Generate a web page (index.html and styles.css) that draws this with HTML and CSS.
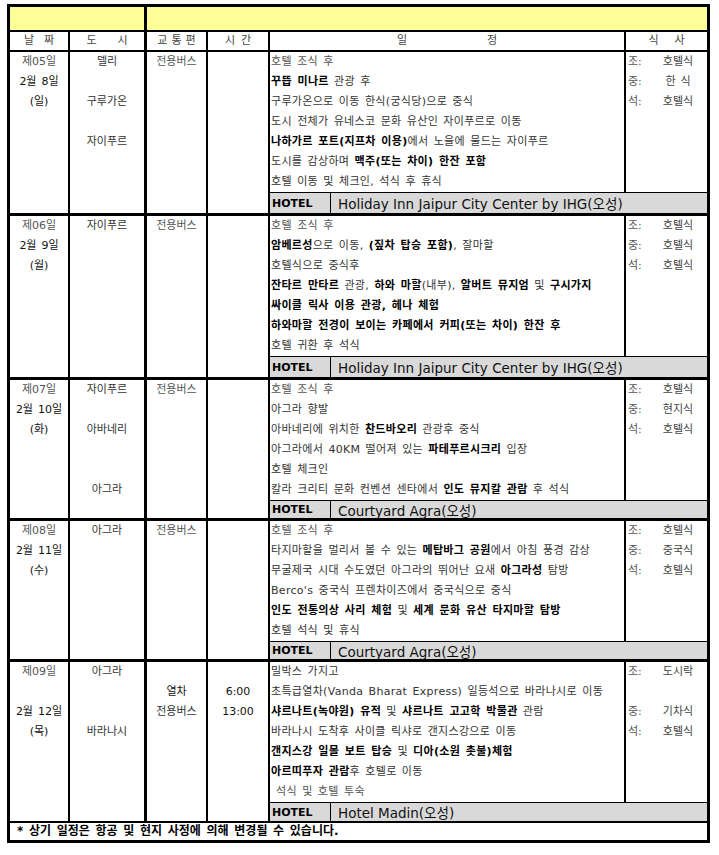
FILE: index.html
```html
<!DOCTYPE html>
<html lang="ko">
<head>
<meta charset="utf-8">
<title>일정표</title>
<link rel="stylesheet" href="styles.css">
</head>
<body>
<div class="sheet">
  <div class="top">
    <div class="top-a"></div>
    <div class="top-b"></div>
  </div>
  <div class="head">
    <div class="hc c1 g10">날<span>짜</span></div>
    <div class="hc c2 g21">도<span>시</span></div>
    <div class="hc c3 g4">교<span>통</span><span>편</span></div>
    <div class="hc c4 g6">시<span>간</span></div>
    <div class="hc c5 g80">일<span>정</span></div>
    <div class="hc c6 g16">식<span>사</span></div>
  </div>

  <!-- Day 5 -->
  <div class="day r7">
    <div class="col c1"><div class="ln lt">제05일</div><div class="ln dk">2월 8일</div><div class="ln dk">(일)</div></div>
    <div class="col c2"><div class="ln">델리</div><div class="ln"></div><div class="ln">구루가온</div><div class="ln"></div><div class="ln">자이푸르</div></div>
    <div class="col c3"><div class="ln lt">전용버스</div></div>
    <div class="col c4"></div>
    <div class="tx sp">호텔 조식 후</div>
    <div class="tx"><b>꾸뜹 미나르</b> 관광 후</div>
    <div class="tx">구루가온으로 이동 한식(궁식당)으로 중식</div>
    <div class="tx">도시 전체가 유네스코 문화 유산인 자이푸르로 이동</div>
    <div class="tx"><b>나하가르 포트(지프차 이용)</b>에서 노을에 물드는 자이푸르</div>
    <div class="tx">도시를 감상하며 <b>맥주(또는 차이) 한잔 포함</b></div>
    <div class="tx">호텔 이동 및 체크인, 석식 후 휴식</div>
    <div class="meal">
      <div class="ml"><span class="mk">조:</span><span class="mv">호텔식</span></div>
      <div class="ml"><span class="mk">중:</span><span class="mv dk">한 식</span></div>
      <div class="ml"><span class="mk">석:</span><span class="mv dk">호텔식</span></div>
    </div>
    <div class="hotel"><div class="hl">HOTEL</div><div class="hn">Holiday Inn Jaipur City Center by IHG(오성)</div></div>
  </div>

  <!-- Day 6 -->
  <div class="day r7">
    <div class="col c1"><div class="ln lt">제06일</div><div class="ln dk">2월 9일</div><div class="ln dk">(월)</div></div>
    <div class="col c2"><div class="ln">자이푸르</div></div>
    <div class="col c3"><div class="ln lt">전용버스</div></div>
    <div class="col c4"></div>
    <div class="tx sp">호텔 조식 후</div>
    <div class="tx"><b>암베르성</b>으로 이동, <b>(짚차 탑승 포함)</b>, 잘마할</div>
    <div class="tx">호텔식으로 중식후</div>
    <div class="tx"><b>잔타르 만타르</b> 관광, <b>하와 마할</b>(내부), <b>알버트 뮤지엄</b> 및 <b>구시가지</b></div>
    <div class="tx"><b>싸이클 릭사 이용 관광, 헤나 체험</b></div>
    <div class="tx"><b>하와마할 전경이 보이는 카페에서 커피(또는 차이) 한잔 후</b></div>
    <div class="tx">호텔 귀환 후 석식</div>
    <div class="meal">
      <div class="ml"><span class="mk">조:</span><span class="mv">호텔식</span></div>
      <div class="ml"><span class="mk">중:</span><span class="mv">호텔식</span></div>
      <div class="ml"><span class="mk">석:</span><span class="mv">호텔식</span></div>
    </div>
    <div class="hotel"><div class="hl">HOTEL</div><div class="hn">Holiday Inn Jaipur City Center by IHG(오성)</div></div>
  </div>

  <!-- Day 7 -->
  <div class="day r6">
    <div class="col c1"><div class="ln lt">제07일</div><div class="ln dk">2월 10일</div><div class="ln dk">(화)</div></div>
    <div class="col c2"><div class="ln">자이푸르</div><div class="ln"></div><div class="ln">아바네리</div><div class="ln"></div><div class="ln"></div><div class="ln">아그라</div></div>
    <div class="col c3"><div class="ln lt">전용버스</div></div>
    <div class="col c4"></div>
    <div class="tx sp">호텔 조식 후</div>
    <div class="tx">아그라 향발</div>
    <div class="tx">아바네리에 위치한 <b>찬드바오리</b> 관광후 중식</div>
    <div class="tx">아그라에서 40KM 떨어져 있는 <b>파테푸르시크리</b> 입장</div>
    <div class="tx">호텔 체크인</div>
    <div class="tx">칼라 크리티 문화 컨벤션 센타에서 <b>인도 뮤지칼 관람</b> 후 석식</div>
    <div class="meal">
      <div class="ml"><span class="mk">조:</span><span class="mv">호텔식</span></div>
      <div class="ml"><span class="mk">중:</span><span class="mv">현지식</span></div>
      <div class="ml"><span class="mk">석:</span><span class="mv">호텔식</span></div>
    </div>
    <div class="hotel"><div class="hl">HOTEL</div><div class="hn">Courtyard Agra(오성)</div></div>
  </div>

  <!-- Day 8 -->
  <div class="day r6">
    <div class="col c1"><div class="ln lt">제08일</div><div class="ln dk">2월 11일</div><div class="ln dk">(수)</div></div>
    <div class="col c2"><div class="ln">아그라</div></div>
    <div class="col c3"><div class="ln lt">전용버스</div></div>
    <div class="col c4"></div>
    <div class="tx sp">호텔 조식 후</div>
    <div class="tx">타지마할을 멀리서 볼 수 있는 <b>메탑바그 공원</b>에서 아침 풍경 감상</div>
    <div class="tx">무굴제국 시대 수도였던 아그라의 뛰어난 요새 <b>아그라성</b> 탐방</div>
    <div class="tx">Berco's 중국식 프렌차이즈에서 중국식으로 중식</div>
    <div class="tx"><b>인도 전통의상 사리 체험</b> 및 <b>세계 문화 유산 타지마할 탐방</b></div>
    <div class="tx">호텔 석식 및 휴식</div>
    <div class="meal">
      <div class="ml"><span class="mk">조:</span><span class="mv">호텔식</span></div>
      <div class="ml"><span class="mk">중:</span><span class="mv">중국식</span></div>
      <div class="ml"><span class="mk">석:</span><span class="mv">호텔식</span></div>
    </div>
    <div class="hotel"><div class="hl">HOTEL</div><div class="hn">Courtyard Agra(오성)</div></div>
  </div>

  <!-- Day 9 -->
  <div class="day r7 last">
    <div class="col c1"><div class="ln lt">제09일</div><div class="ln"></div><div class="ln dk">2월 12일</div><div class="ln dk">(목)</div></div>
    <div class="col c2"><div class="ln">아그라</div><div class="ln"></div><div class="ln"></div><div class="ln">바라나시</div></div>
    <div class="col c3"><div class="ln"></div><div class="ln dk">열차</div><div class="ln">전용버스</div></div>
    <div class="col c4"><div class="ln"></div><div class="ln dk">6:00</div><div class="ln dk">13:00</div></div>
    <div class="tx">밀박스 가지고</div>
    <div class="tx">초특급열차(Vanda Bharat Express) 일등석으로 바라나시로 이동</div>
    <div class="tx"><b>샤르나트(녹야원) 유적</b> 및 <b>샤르나트 고고학 박물관</b> 관람</div>
    <div class="tx">바라나시 도착후 사이클 릭샤로 갠지스강으로 이동</div>
    <div class="tx"><b>갠지스강 일몰 보트 탑승</b> 및 <b>디아(소원 촛불)체험</b></div>
    <div class="tx"><b>아르띠푸자 관람</b>후 호텔로 이동</div>
    <div class="tx ind lt">석식 및 호텔 투숙</div>
    <div class="meal">
      <div class="ml"><span class="mk">조:</span><span class="mv">도시락</span></div>
      <div class="ml"></div>
      <div class="ml"><span class="mk">중:</span><span class="mv">기차식</span></div>
      <div class="ml"><span class="mk">석:</span><span class="mv">호텔식</span></div>
    </div>
    <div class="hotel"><div class="hl">HOTEL</div><div class="hn">Hotel Madin(오성)</div></div>
  </div>

  <div class="foot">* 상기 일정은 항공 및 현지 사정에 의해 변경될 수 있습니다.</div>
</div>
</body>
</html>
```

FILE: styles.css
```css
html, body {
  margin: 0;
  padding: 0;
  background: #fff;
}

.sheet {
  margin: 4px 0 0 7px;
  width: 703px;
  box-sizing: border-box;
  border: 3px solid #000;
  font-family: "DejaVu Sans", "Noto Sans CJK KR", sans-serif;
  font-size: 11px;
  color: #333;
  word-spacing: 1.5px;
}

b {
  font-weight: bold;
  color: #000;
}

.top {
  display: grid;
  grid-template-columns: 137px 1fr;
  height: 25px;
  box-sizing: border-box;
  border-bottom: 2px solid #000;
  background: #ffff99;
}

.top-a {
  border-right: 3px solid #000;
}

.head,
.day {
  display: grid;
  grid-template-columns: 60px 77px 61px 62px 354px 83px;
}

.head {
  height: 20px;
  box-sizing: border-box;
  border-bottom: 2px solid #000;
}

.hc {
  display: flex;
  justify-content: center;
  align-items: center;
  color: #444;
  line-height: 18px;
}

.g4 span { margin-left: 4px; }
.g6 span { margin-left: 6px; }
.g10 span { margin-left: 10px; }
.g16 span { margin-left: 16px; }
.g21 span { margin-left: 21px; }
.g80 span { margin-left: 80px; }

.c1 { grid-column: 1; border-right: 2px solid #000; }
.c2 { grid-column: 2; border-right: 3px solid #000; }
.c3 { grid-column: 3; border-right: 2px solid #000; }
.c4 { grid-column: 4; border-right: 2px solid #000; }
.c5 { grid-column: 5; }
.c6 { grid-column: 6; border-left: 2px solid #000; }

.day {
  border-bottom: 3px solid #000;
}

.day.r7 {
  grid-template-rows: repeat(7, 20px) 21px;
}

.day.r6 {
  grid-template-rows: repeat(6, 20px) 18px;
}

.day.last {
  grid-template-rows: repeat(7, 20px) 19px;
  border-bottom-width: 2px;
}

.col {
  grid-row: 1 / -1;
}

.ln {
  height: 20px;
  line-height: 19px;
  text-align: center;
}

.lt { color: #555; }
.dk { color: #111; }

.tx {
  grid-column: 5;
  line-height: 20px;
  padding-left: 1px;
  letter-spacing: 0.3px;
  white-space: nowrap;
  overflow: hidden;
}

.tx.sp {
  color: #555;
}

.tx.ind {
  padding-left: 6px;
}

.meal {
  grid-column: 6;
  grid-row: 1 / -2;
  border-left: 2px solid #000;
}

.ml {
  display: flex;
  height: 20px;
  line-height: 19px;
}

.mk {
  width: 21px;
  padding-left: 2px;
  color: #555;
}

.mv {
  flex: 1;
  text-align: center;
  color: #444;
}

.hotel {
  grid-column: 5 / 7;
  grid-row: -2;
  display: flex;
  align-items: stretch;
  background: #d9d9d9;
  border-top: 1px solid #000;
  min-height: 0;
}

.hl {
  width: 58px;
  flex: none;
  border-right: 1px solid #000;
  padding-left: 2px;
  font-weight: bold;
  color: #000;
  display: flex;
  align-items: center;
}

.hn {
  padding-left: 7px;
  font-size: 13.5px;
  color: #111;
  display: flex;
  align-items: center;
  white-space: nowrap;
  word-spacing: 0;
}

.foot {
  height: 17px;
  line-height: 17px;
  padding-left: 7px;
  font-size: 12px;
  font-weight: bold;
  color: #000;
  word-spacing: 1.5px;
}
```
